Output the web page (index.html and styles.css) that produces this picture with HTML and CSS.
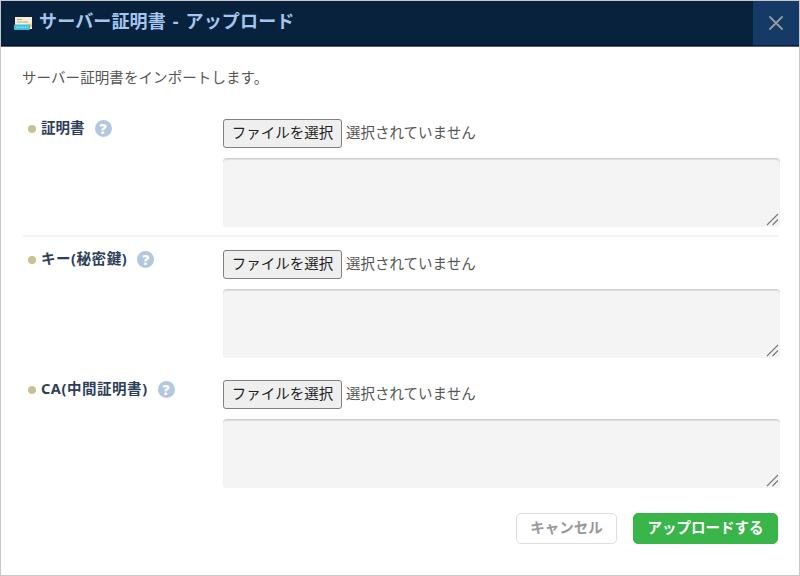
FILE: index.html
```html
<!DOCTYPE html>
<html lang="ja">
<head>
<meta charset="utf-8">
<title>サーバー証明書 - アップロード</title>
<link rel="stylesheet" href="styles.css">
</head>
<body>
<main class="dialog">
  <header class="header">
    <svg class="cert" viewBox="0 0 20 16" width="20" height="16">
      <rect x="2" y="1" width="17" height="12" fill="#f3edda"/>
      <path d="M4 3.5h5M4 6h11" stroke="#b5ad90" stroke-width="1.1"/>
      <circle cx="17" cy="9.5" r="2" fill="#f2c35a"/>
      <rect x="1" y="8.5" width="16" height="5.5" rx="1" fill="#3fc1de"/>
      <path d="M3 11.3h12" stroke="#8edeec" stroke-width="1.6" stroke-dasharray="1.5 .7"/>
    </svg>
    <h1>サーバー証明書 - アップロード</h1>
    <button class="close" aria-label="閉じる"><svg viewBox="0 0 14 14" width="14" height="14"><path d="M1 1l12 12M13 1L1 13" stroke="#989b9e" stroke-width="1.8" stroke-linecap="round"/></svg></button>
  </header>
  <p class="intro">サーバー証明書をインポートします。</p>
  <section class="row divided">
    <div class="label"><i class="dot"></i><span>証明書</span><b class="help">?</b></div>
    <div class="field">
      <div class="file"><button class="choose">ファイルを選択</button><span>選択されていません</span></div>
      <div class="area"><svg class="grip" viewBox="0 0 13 13" width="13" height="13"><path d="M1 12L12 1M6.5 12L12 6.5" stroke="#777" stroke-width="1.1"/></svg></div>
    </div>
  </section>
  <section class="row">
    <div class="label"><i class="dot"></i><span class="wide">キー(秘密鍵)</span><b class="help">?</b></div>
    <div class="field">
      <div class="file"><button class="choose">ファイルを選択</button><span>選択されていません</span></div>
      <div class="area"><svg class="grip" viewBox="0 0 13 13" width="13" height="13"><path d="M1 12L12 1M6.5 12L12 6.5" stroke="#777" stroke-width="1.1"/></svg></div>
    </div>
  </section>
  <section class="row last">
    <div class="label"><i class="dot"></i><span class="wide">CA(中間証明書)</span><b class="help">?</b></div>
    <div class="field">
      <div class="file"><button class="choose">ファイルを選択</button><span>選択されていません</span></div>
      <div class="area"><svg class="grip" viewBox="0 0 13 13" width="13" height="13"><path d="M1 12L12 1M6.5 12L12 6.5" stroke="#777" stroke-width="1.1"/></svg></div>
    </div>
  </section>
  <footer class="actions">
    <button class="cancel">キャンセル</button>
    <button class="upload">アップロードする</button>
  </footer>
</main>
</body>
</html>
```
FILE: styles.css
```css
* { box-sizing: border-box; }
body { margin: 0; }
body, button { font-family: "Noto Sans", "Noto Sans CJK JP", sans-serif; font-size: 14.5px; }
button { padding: 0; white-space: nowrap; }
svg { display: block; fill: none; }
.dialog { width: 800px; height: 576px; border: 1px solid #c8c8c8; background: #fff; color: #555; overflow: hidden; }
.header { display: flex; align-items: center; height: 46px; padding-left: 12px; background: #08223d; border-bottom: 1px solid #53657a; box-shadow: inset 0 -1px #001028; }
h1 { flex: 1; margin: 0 0 5px 6px; font-size: 18px; line-height: 24px; font-weight: 700; color: #a5c5ef; white-space: nowrap; word-spacing: 2px; letter-spacing: .16px; }
.close { display: flex; align-items: center; justify-content: center; width: 46px; height: 45px; border: 0; border-bottom: 1px solid #061c42; background: #153a66; }
.intro { margin: 19px 0 1px 21px; line-height: 22px; letter-spacing: .08px; }
.row { display: flex; height: 131px; margin: 0 21px 0 22px; padding-top: 13px; }
.intro + .row { height: 148px; padding-top: 30px; }
.divided { border-bottom: 2px solid #f1f5fa; }
.row.last { height: 145px; padding-top: 12px; }
.label { display: flex; flex: none; align-items: center; width: 200px; height: 20px; padding-left: 5px; font-weight: 700; color: #2d3e58; white-space: nowrap; }
.label span { line-height: 20px; padding-bottom: 4px; margin-top: -1px; }
.label .wide { letter-spacing: .55px; }
.dot { width: 8px; height: 8px; margin-right: 5px; border-radius: 50%; background: #c8c194; }
.help { width: 17px; height: 17px; margin: -2px 0 0 10px; border-radius: 50%; background: #b3c8de; color: #fff; font-size: 14px; line-height: 17px; text-align: center; }
.field { flex: none; width: 557px; }
.file { display: flex; align-items: center; gap: 4px; height: 29px; }
.choose { width: 119px; height: 29px; padding-bottom: 2px; border: 1px solid #808080; border-radius: 3px; background: #efefef; color: #222; line-height: 25px; }
.file span { padding-bottom: 3px; line-height: 26px; }
.area { display: flex; justify-content: flex-end; align-items: flex-end; height: 69px; margin-top: 10px; padding: 0 1px 1px; border-top: 1px solid #ccc; border-radius: 4px; background: #f4f4f4; box-shadow: inset 0 1px 1px #dedede; }
.actions { display: flex; justify-content: flex-end; gap: 16px; margin-right: 21px; }
.cancel, .upload { height: 31px; padding-bottom: 3px; border-radius: 5px; font-weight: 700; line-height: 26px; }
.cancel { width: 101px; border: 1px solid #ddd; background: #fff; color: #999; }
.upload { width: 145px; border: 1px solid #36b449; background: #39b54a; color: #fff; }
```
